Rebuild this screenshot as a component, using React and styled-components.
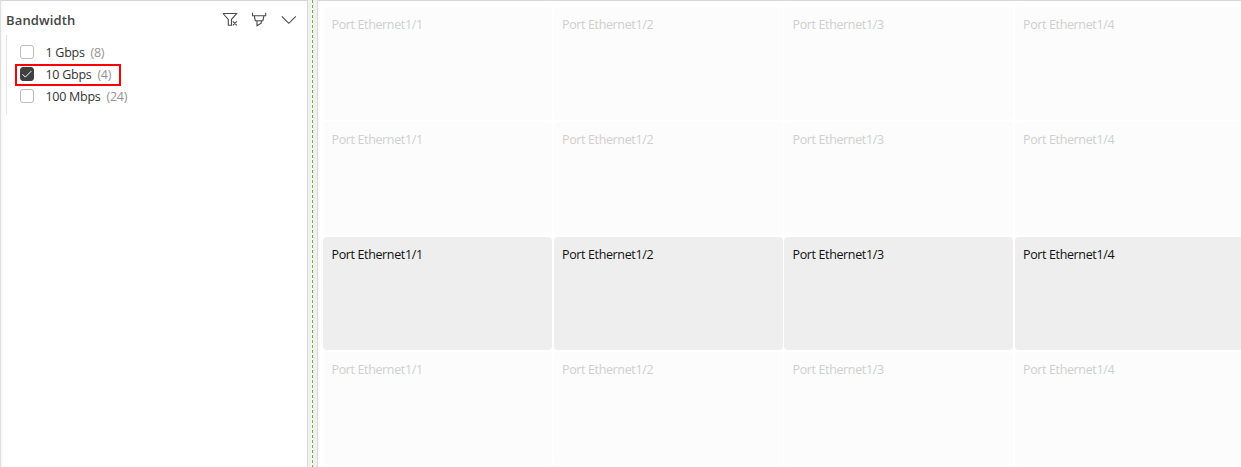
import React from "react";
import styled, { createGlobalStyle } from "styled-components";

const GlobalStyle = createGlobalStyle`
  *, *::after { box-sizing: border-box; }
  body { margin: 0; background: #fff; font-family: "Open Sans", "Noto Sans", sans-serif; overflow: hidden; }
`;

const Page = styled.div`
  display: flex;
  width: 1241px;
  height: 467px;
  overflow: hidden;
  background: #fff;
`;

const FilterPane = styled.aside`
  flex: 0 0 307px;
  border-top: 1px solid #d6d6d6;
  border-left: 1px solid #dedede;
  background: linear-gradient(to right, #f8f8f8, #fff 5px);
`;

const PaneHeader = styled.header`
  display: flex;
  align-items: center;
  height: 34px;
  padding: 4px 10px 0 5px;
`;

const Title = styled.h2`
  margin: 0;
  flex: 1;
  font-size: 13px;
  line-height: 18px;
  font-weight: 600;
  letter-spacing: 0.15px;
  color: #444;
`;

const Tools = styled.div`
  display: flex;
  align-items: center;
  gap: 13.5px;
`;

const ToolIcon = styled.svg`
  display: block;
  width: 16px;
  height: 16px;
  fill: none;
  stroke: #484848;
  stroke-width: 1.1;
`;

const Options = styled.ul`
  list-style: none;
  margin: 0 0 0 5px;
  padding: 6px 0 6px 8px;
  height: 79px;
  border-left: 1px solid #e3e3e3;
`;

const Option = styled.li`
  display: flex;
  align-items: center;
  width: max-content;
  height: 22px;
  padding-left: 5px;
`;

const Highlighted = styled(Option)`
  position: relative;

  &::after {
    content: "";
    position: absolute;
    left: 0;
    top: 1px;
    width: 106px;
    height: 22px;
    border: 2px solid #fa0000;
  }
`;

const Box = styled.span`
  display: flex;
  align-items: center;
  justify-content: center;
  width: 14px;
  height: 14px;
  margin-right: 11.5px;
  border: 1px solid ${(p) => (p.$checked ? "#404040" : "#bcbcbc")};
  border-radius: 3px;
  background: ${(p) => (p.$checked ? "#404040" : "#fff")};
`;

const Label = styled.span`
  position: relative;
  top: 1px;
  font-size: 12.5px;
  line-height: 18px;
  letter-spacing: -0.28px;
  color: #333;
`;

const Count = styled(Label)`
  margin-left: 6px;
  color: #949494;
`;

const Splitter = styled.div`
  flex: 0 0 11px;
  display: flex;
  justify-content: center;
  border: solid #d9d9d9;
  border-width: 0 1px;
  background: #f1f1f1;
`;

const Grip = styled.div`
  width: 1px;
  background: repeating-linear-gradient(to bottom, #6cb33f 0 3px, #fff 3px 5px);
  box-shadow: -1px 0 #f3f8f0;
`;

const Board = styled.main`
  flex: 1;
  min-width: 0;
  padding: 6px 0 0 5px;
  border-top: 1px solid #d6d6d6;
  overflow: hidden;
`;

const PortGrid = styled.div`
  display: grid;
  grid-template-columns: repeat(4, 229px);
  grid-auto-rows: 113px;
  column-gap: 1.5px;
  row-gap: 2px;
`;

const Port = styled.div`
  padding: 9px 8.5px;
  border-radius: 4px;
  background: ${(p) => (p.$active ? "#eeeeee" : "#fcfcfc")};
  color: ${(p) => (p.$active ? "#111" : "#cfcfcf")};
  font-size: 12.5px;
  line-height: 18px;
  letter-spacing: -0.37px;
  white-space: nowrap;
`;

const options = [
  { label: "1 Gbps", count: 8 },
  { label: "10 Gbps", count: 4, checked: true },
  { label: "100 Mbps", count: 24 },
];
const ports = ["1/1", "1/2", "1/3", "1/4"];

export default function App() {
  return (
    <>
      <GlobalStyle />
      <Page>
        <FilterPane>
          <PaneHeader>
            <Title>Bandwidth</Title>
            <Tools>
              <ToolIcon viewBox="0 0 16 16">
                <path d="M1 1.5h13.6L9.3 7.6M1 1.5l5.3 6v5.8h3.2V7.5M10.8 9.3l4 4M14.8 9.3l-4 4" />
              </ToolIcon>
              <ToolIcon viewBox="0 0 16 16">
                <path d="M.5 .8v3h13.2v-3M2.3 3.8l1 4.9h7.6l1-4.9M5 8.7v5l4.2-2.6V8.7" />
              </ToolIcon>
              <ToolIcon viewBox="0 0 16 16">
                <path d="M.8 4.4l7 6.9 7-6.9" />
              </ToolIcon>
            </Tools>
          </PaneHeader>
          <Options>
            {options.map((o) => {
              const Row = o.checked ? Highlighted : Option;
              return (
                <Row key={o.label}>
                  <Box $checked={o.checked}>
                    {o.checked && (
                      <svg width="12" height="12" viewBox="0 0 12 12" fill="none" stroke="#fff">
                        <path d="M1.5 6.3l2.8 2.8 6-6" />
                      </svg>
                    )}
                  </Box>
                  <Label>{o.label}</Label>
                  <Count>({o.count})</Count>
                </Row>
              );
            })}
          </Options>
        </FilterPane>
        <Splitter>
          <Grip />
        </Splitter>
        <Board>
          <PortGrid>
            {[0, 1, 2, 3].map((row) =>
              ports.map((p) => (
                <Port key={row + p} $active={row === 2}>
                  Port Ethernet{p}
                </Port>
              ))
            )}
          </PortGrid>
        </Board>
      </Page>
    </>
  );
}
